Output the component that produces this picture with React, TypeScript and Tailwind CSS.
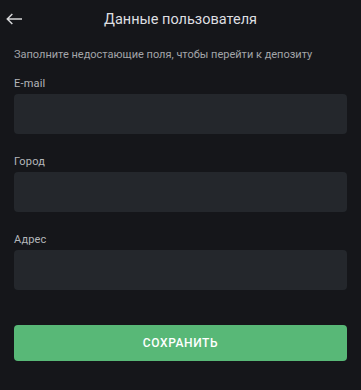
const fields = ["E-mail", "Город", "Адрес"];

const BackArrow = () => (
  <svg width="16" height="12" viewBox="0 0 16 12" fill="none">
    <path
      d="M15.5 6H1.5M5.8 1.5 1.3 6l4.5 4.5"
      stroke="currentColor"
      strokeWidth="1.5"
      strokeLinecap="square"
    />
  </svg>
);

const Field = ({ label }: { label: string }) => (
  <div className="flex flex-col">
    <label className="h-[24px] pt-[7px] text-[11px] leading-[14px] text-[#b4b6ba] tracking-[0.2px]">
      {label}
    </label>
    <input
      className="h-[40px] w-full rounded-[4px] bg-[#24272c] px-3 text-[13px] text-white outline-none"
      type="text"
    />
  </div>
);

export default function App() {
  return (
    <div
      className="flex h-[390px] w-full flex-col bg-[#15161a] px-[14px]"
      style={{ fontFamily: "Roboto, 'Noto Sans', sans-serif" }}
    >
      <header className="relative flex h-[40px] items-center justify-center">
        <button className="absolute left-[-8px] top-[13px] flex text-[#d6d7d9]">
          <BackArrow />
        </button>
        <h1 className="text-[14.5px] text-[#dedfe1]">Данные пользователя</h1>
      </header>
      <p className="mt-[8px] text-[11px] leading-[14px] text-[#a3a5a9]">
        Заполните недостающие поля, чтобы перейти к депозиту
      </p>
      <div className="mt-[8px] flex flex-col gap-[14px]">
        {fields.map((f) => (
          <Field key={f} label={f} />
        ))}
      </div>
      <button className="mt-[35px] h-[36px] w-full rounded-[4px] bg-[#58b877] text-[12px] font-medium tracking-[0.6px] text-white">
        СОХРАНИТЬ
      </button>
    </div>
  );
}
